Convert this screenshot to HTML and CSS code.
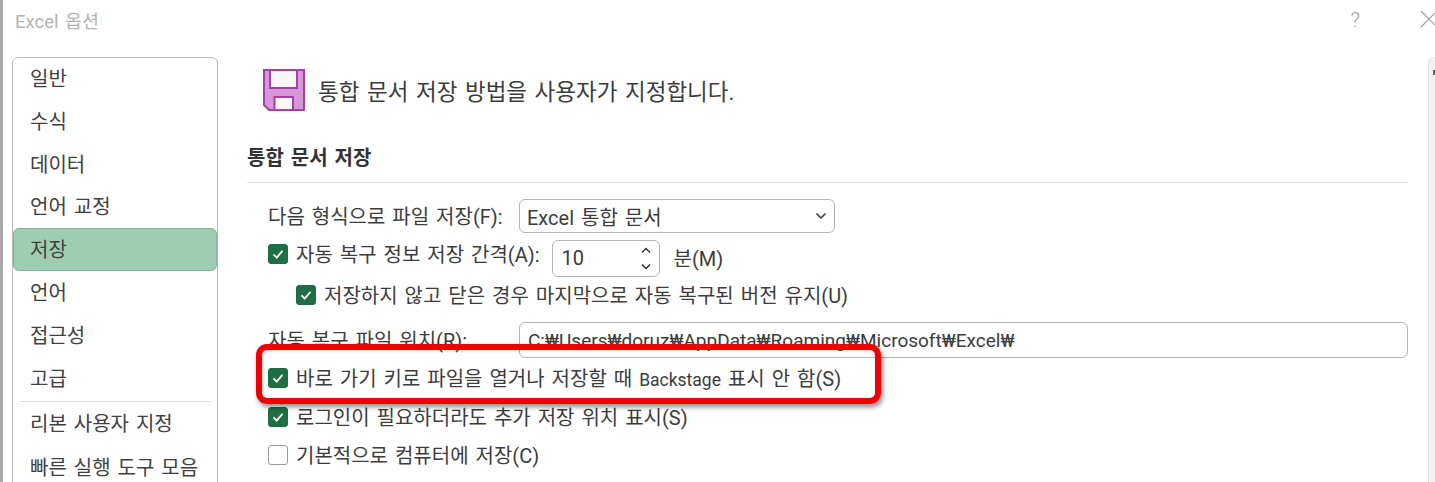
FILE: index.html
```html
<!DOCTYPE html>
<html lang="ko">
  <head>
    <meta charset="utf-8" />
    <title>Excel 옵션</title>
    <link rel="stylesheet" href="styles.css">
  </head>

  <body>
    <div class="dialog">
      <div class="title-bar">
        <span class="title">Excel 옵션</span>
        <span class="help">?</span>
        <svg class="close" width="18" height="18" viewBox="0 0 18 18"><path d="M1 1 17 17M17 1 1 17" /></svg>
      </div>

      <div class="main">
        <ul class="side-menu">
          <li>일반</li>
          <li>수식</li>
          <li>데이터</li>
          <li>언어 교정</li>
          <li class="active">저장</li>
          <li>언어</li>
          <li>접근성</li>
          <li class="last-group">고급</li>
          <li>리본 사용자 지정</li>
          <li>빠른 실행 도구 모음</li>
        </ul>

        <div class="content">
          <div class="intro">
            <svg class="save-icon" width="42" height="42" viewBox="0 0 42 42">
              <path class="disk" d="M1 1H41V41H6L1 36Z" />
              <rect class="paper" x="7" y="1" width="27" height="18" />
              <rect class="paper" x="11.500" y="28" width="18.500" height="13" />
            </svg>
            <span>통합 문서 저장 방법을 사용자가 지정합니다.</span>
          </div>

          <h3 class="section-title">통합 문서 저장</h3>

          <div class="row format-row">
            <label class="field-label">다음 형식으로 파일 저장(F):</label>
            <div class="select-box">
              <span>Excel 통합 문서</span>
              <svg width="12" height="8" viewBox="0 0 12 8"><path d="M1.5 1.5 6 6l4.5-4.5" /></svg>
            </div>
          </div>

          <div class="row autosave-row">
            <span class="check on"><svg viewBox="0 0 20 20"><path d="M5 10.5 8.5 14 15 6.500" /></svg></span>
            <label>자동 복구 정보 저장 간격(A):</label>
            <div class="spin-box">
              <span>10</span>
              <div class="spin-arrows">
                <svg width="10" height="7" viewBox="0 0 10 7"><path d="M1 5.500 5 1.500l4 4" /></svg>
                <svg width="10" height="7" viewBox="0 0 10 7"><path d="M1 1.500 5 5.500l4-4" /></svg>
              </div>
            </div>
            <label class="unit">분(M)</label>
          </div>

          <div class="row keep-row">
            <span class="check on"><svg viewBox="0 0 20 20"><path d="M5 10.5 8.5 14 15 6.500" /></svg></span>
            <label>저장하지 않고 닫은 경우 마지막으로 자동 복구된 버전 유지(U)</label>
          </div>

          <div class="row location-row">
            <label class="field-label">자동 복구 파일 위치(R):</label>
            <div class="path-box">C:₩Users₩doruz₩AppData₩Roaming₩Microsoft₩Excel₩</div>
          </div>

          <div class="row backstage-row">
            <span class="check on"><svg viewBox="0 0 20 20"><path d="M5 10.5 8.5 14 15 6.500" /></svg></span>
            <label>바로 가기 키로 파일을 열거나 저장할 때 <span class="latin">Backstage</span> 표시 안 함(S)</label>
          </div>

          <div class="row login-row">
            <span class="check on"><svg viewBox="0 0 20 20"><path d="M5 10.5 8.5 14 15 6.500" /></svg></span>
            <label>로그인이 필요하더라도 추가 저장 위치 표시(S)</label>
          </div>

          <div class="row default-row">
            <span class="check"></span>
            <label>기본적으로 컴퓨터에 저장(C)</label>
          </div>
        </div>

        <div class="scroll-track"></div>
      </div>

      <div class="highlight"></div>
    </div>
  </body>
</html>
```

FILE: styles.css
```css
* {
  box-sizing: border-box;
}

html,
body {
  margin: 0;
  height: 482px;
  overflow: hidden;
  background-color: #fff;
}

body {
  font-family: Roboto, "Noto Sans CJK KR", sans-serif;
  font-size: 20px;
  word-spacing: 2px;
  color: #3c3c3c;
}

.dialog {
  position: relative;
  height: 482px;
  overflow: hidden;
  border-left: 3px solid #a9a9a9;
  background-color: #fff;
}

/*=============================================*/

.title-bar {
  display: flex;
  align-items: center;
  height: 40px;
  padding-left: 12px;
}

.title {
  font-size: 18.500px;
  color: #b4b4b4;
}

.help {
  margin-left: auto;
  margin-right: 60px;
  font-size: 21px;
  font-weight: 300;
  color: #a0a0a0;
}

.close {
  flex: none;
  margin: -3px -3px 0 0;
}

.close path {
  fill: none;
  stroke: #a0a0a0;
  stroke-width: 1.2;
}

.main {
  display: flex;
  height: 442px;
  padding: 17px 0 0 9px;
}

/*=============================================*/

.side-menu {
  flex: none;
  width: 206px;
  height: 460px;
  margin: 0;
  padding: 0;
  list-style: none;
  border: 1.5px solid #b9b9b9;
  border-radius: 6px;
}

.side-menu li {
  height: 42.800px;
  padding-left: 17px;
  line-height: 44.800px;
  color: #404040;
}

.side-menu li:first-child {
  margin-top: -1px;
}

.side-menu li:last-child {
  margin-top: 1px;
}

.side-menu li.active {
  border: 1px solid #7fb596;
  border-radius: 6px;
  background-color: #a0cdb1;
  padding-left: 16px;
  line-height: 42px;
}

.side-menu li.last-group {
  position: relative;
  height: 45.400px;
}

.side-menu li.last-group::after {
  content: "";
  position: absolute;
  left: 6px;
  right: 5px;
  bottom: 0;
  border-bottom: 1px solid #e3e3e3;
}

/*=============================================*/

.content {
  flex: none;
  width: 1161px;
  margin-left: 29px;
}

.intro {
  display: flex;
  align-items: center;
  gap: 13px;
  height: 42px;
  margin: 12px 0 0 16px;
  font-size: 22.500px;
}

.disk {
  fill: #d597d8;
  stroke: #a83ea8;
  stroke-width: 2;
}

.paper {
  fill: #f7f7f7;
  stroke: #a83ea8;
  stroke-width: 2;
}

.section-title {
  display: flex;
  align-items: center;
  height: 51px;
  margin: 21px 0 0;
  padding-bottom: 2px;
  font-size: 20px;
  font-weight: 700;
  color: #333;
  border-bottom: 1px solid #e4e4e4;
}

.row {
  display: flex;
  align-items: center;
  gap: 8px;
  height: 36px;
  padding-left: 21px;
}

.row label {
  padding-bottom: 2px;
}

.latin {
  font-size: 17.500px;
}

.format-row {
  height: 34px;
  margin-top: 16px;
}

.autosave-row {
  margin-top: 3px;
}

.keep-row {
  margin-top: 5px;
  padding-left: 49px;
}

.location-row {
  margin-top: 9px;
}

.backstage-row {
  margin-top: 2px;
}

.login-row {
  margin-top: 3px;
}

.default-row {
  margin-top: 2px;
}

.field-label {
  flex: none;
  width: 243px;
}

/*=============================================*/

.check {
  flex: none;
  width: 20px;
  height: 20px;
  border: 1.5px solid #9a9a9a;
  border-radius: 3px;
  background-color: #fff;
}

.check.on {
  border-color: #1e6b41;
  background-color: #1e6f43;
}

.check svg {
  display: block;
  width: 100%;
  height: 100%;
}

.check path {
  fill: none;
  stroke: #fff;
  stroke-width: 2;
}

.select-box,
.spin-box,
.path-box {
  border: 1.5px solid #b4b4b4;
  border-radius: 6px;
  background-color: #fff;
}

.select-box {
  display: flex;
  align-items: center;
  justify-content: space-between;
  width: 316px;
  height: 34px;
  padding: 0 7px;
}

.select-box path,
.spin-arrows path {
  fill: none;
  stroke: #333;
  stroke-width: 1.5;
}

.spin-box {
  display: flex;
  align-items: center;
  justify-content: space-between;
  width: 108px;
  height: 37px;
  margin: 8px 0 0 4px;
  padding: 0 8px 0 9px;
}

.spin-arrows {
  display: flex;
  flex-direction: column;
  gap: 9px;
}

.spin-arrows svg {
  display: block;
}

.row .unit {
  margin: 8px 0 0 6px;
}

.path-box {
  flex: none;
  width: 889px;
  height: 36px;
  padding-left: 8px;
  line-height: 36px;
  font-size: 19px;
}

.scroll-track {
  position: relative;
  flex: none;
  width: 18px;
  height: 440px;
  margin-left: 20px;
  background-color: #f1f1f1;
  border-left: 1px solid #e4e4e4;
  border-top-left-radius: 5px;
}

/* scroll-up arrow, mostly cut off by the window edge */
.scroll-track::before {
  content: "";
  position: absolute;
  top: 13px;
  left: 4px;
  width: 3px;
  height: 5px;
  background-color: #666;
}

/*=============================================*/

/* annotation drawn over the screenshot */
.highlight {
  position: absolute;
  left: 253px;
  top: 344px;
  width: 625px;
  height: 60px;
  border: 6px solid #f00000;
  border-radius: 11px;
  box-shadow: 2px 3px 5px rgba(0, 0, 0, 0.45), inset 1px 1px 3px rgba(0, 0, 0, 0.2);
}
```
